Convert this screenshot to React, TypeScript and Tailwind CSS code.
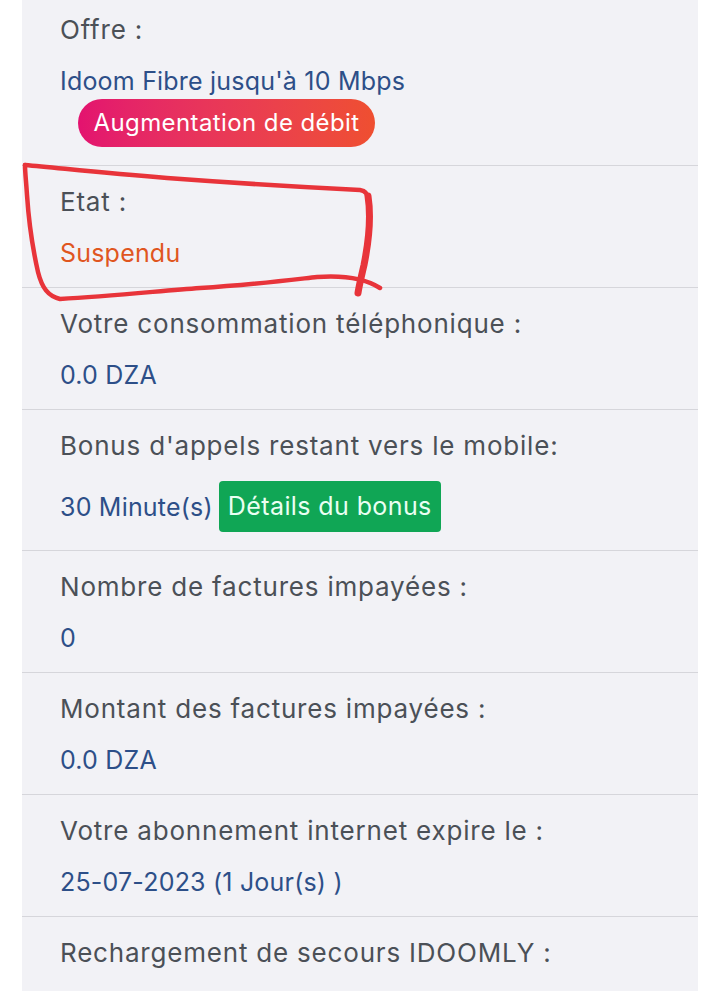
import type { ReactNode } from "react";

interface InfoRowProps {
  label: string;
  children: ReactNode;
  first?: boolean;
  last?: boolean;
}

function InfoRow({ label, children, first = false, last = false }: InfoRowProps) {
  return (
    <div
      className={[
        "pl-[38px] pr-6",
        first ? "pt-[14px]" : "pt-[20px]",
        last ? "pb-10" : "pb-[18px] border-b border-[#d6d6db]",
      ].join(" ")}
    >
      <p className="text-[26px] leading-[32px] tracking-[0.8px] text-[#4b5057]">{label}</p>
      <div className="mt-[19px]">{children}</div>
    </div>
  );
}

const valueCls = "text-[25px] leading-[32px] tracking-[0.2px] text-[#2d4f88]";

export default function App() {
  return (
    <div
      className="relative h-[991px] w-[720px] overflow-hidden bg-white"
      style={{ fontFamily: "Inter, 'Noto Sans', sans-serif" }}
    >
      <div className="ml-[22px] w-[676px] bg-[#f2f2f6]">
        {/* ── Offre ── */}
        <InfoRow label="Offre :" first>
          <p className={valueCls}>Idoom Fibre jusqu'à 10 Mbps</p>
          <span className="ml-[18px] mt-[2px] inline-flex h-[48px] w-[297px] items-center justify-center rounded-full bg-gradient-to-r from-[#e3126f] to-[#ef4f30] text-[24px] tracking-[0.4px] text-white">
            Augmentation de débit
          </span>
        </InfoRow>

        {/* ── Etat ── */}
        <InfoRow label="Etat :">
          <p className="text-[25px] leading-[32px] tracking-[0.2px] text-[#e0561f]">Suspendu</p>
        </InfoRow>

        <InfoRow label="Votre consommation téléphonique :">
          <p className={valueCls}>0.0 DZA</p>
        </InfoRow>

        {/* ── Bonus + button ── */}
        <InfoRow label="Bonus d'appels restant vers le mobile:">
          <div className="flex items-center gap-[6px]">
            <span className={valueCls}>30 Minute(s)</span>
            <button className="flex h-[51px] w-[222px] items-center justify-center rounded-[4px] bg-[#10a655] text-[25px] tracking-[0.4px] text-[#eafff2]">
              Détails du bonus
            </button>
          </div>
        </InfoRow>

        <InfoRow label="Nombre de factures impayées :">
          <p className={valueCls}>0</p>
        </InfoRow>

        <InfoRow label="Montant des factures impayées :">
          <p className={valueCls}>0.0 DZA</p>
        </InfoRow>

        <InfoRow label="Votre abonnement internet expire le :">
          <p className={valueCls}>25-07-2023 (1 Jour(s) )</p>
        </InfoRow>

        <InfoRow label="Rechargement de secours IDOOMLY :" last>
          <p className={valueCls}>&nbsp;</p>
        </InfoRow>
      </div>

      {/* hand-drawn red circle around "Etat" */}
      <svg
        className="pointer-events-none absolute left-0 top-0"
        width="720"
        height="991"
        viewBox="0 0 720 991"
        fill="none"
      >
        <path
          d="M25 165 C60 168 100 173 167 178 S300 187 360 190 Q368 191 368 200"
          stroke="#e8343a"
          strokeWidth="4.5"
          strokeLinecap="round"
          strokeLinejoin="round"
        />
        <path
          d="M368 196 C371 215 369 240 364 265 C361 278 359 286 358 293"
          stroke="#e8343a"
          strokeWidth="7"
          strokeLinecap="round"
        />
        <path
          d="M380 288 C366 279 345 275 317 277 C290 280 250 285 200 288 C160 291 110 296 60 299 C48 296 42 288 38 272 C33 250 29 225 27 195 C26 180 25 172 25 165"
          stroke="#e8343a"
          strokeWidth="4.5"
          strokeLinecap="round"
          strokeLinejoin="round"
        />
      </svg>
    </div>
  );
}
